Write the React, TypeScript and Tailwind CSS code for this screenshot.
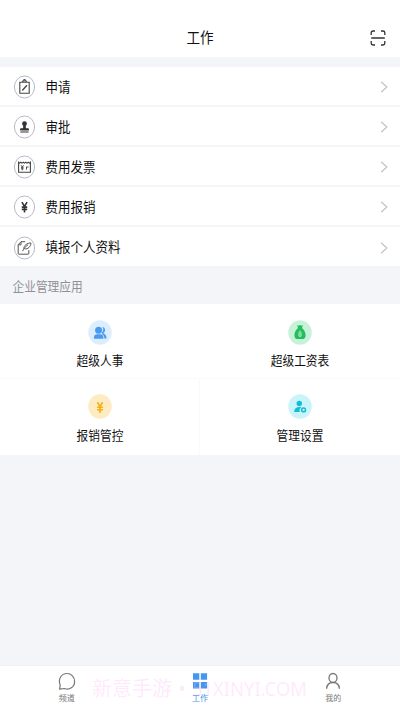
import React from 'react';

const font = "font-['Roboto','Noto_Sans_CJK_SC',sans-serif]";

function Ring({ children }: { children: React.ReactNode }) {
  return (
    <svg className="h-6 w-[23px] shrink-0" viewBox="0 0 23 24" fill="none" stroke="#444" strokeWidth="1.1">
      <ellipse cx="11.5" cy="12" rx="10.1" ry="11" stroke="#a9b2c3" strokeWidth="0.9" />
      {children}
    </svg>
  );
}

const rows = [
  {
    label: '申请',
    icon: (
      <>
        <path d="M6.8 7.2h9.4v11H6.8zM9.3 7.2l.8-1.5h2.8l.8 1.5" />
        <path d="M10.4 5.6a1.1 1.1 0 0 1 2.2 0" />
        <path d="M9.3 15.5l4.6-5.2" strokeWidth="1.3" />
      </>
    ),
  },
  {
    label: '审批',
    icon: (
      <g fill="#333" stroke="none">
        <circle cx="11.5" cy="8.7" r="2.4" />
        <path d="M10.4 10h2.2l.4 3.2h2.2q.7 0 .7.8v1.6H7.1V14q0-.8.7-.8H10zM7.4 16.5h8.2v1H7.4z" />
      </g>
    ),
  },
  {
    label: '费用发票',
    icon: (
      <>
        <path d="M5.6 17.2V7.2l1 .9 1.2-.9 1.2.9 1.3-.9 1.2.9 1.3-.9 1.2.9 1.2-.9 1.2.9 1-.9v10z" />
        <path d="M8 10.2l1.3 1.8 1.3-1.8M9.3 12v3.3M8 12.3h2.6M8 13.8h2.6M13 12h2.6M13.5 12v2.7" strokeWidth="0.9" />
      </>
    ),
  },
  {
    label: '费用报销',
    icon: <path d="M8.9 7.2l2.6 4.3 2.6-4.3M11.5 11.5v6M8.8 12.1h5.4M8.8 14.4h5.4" stroke="#333" strokeWidth="1.6" />,
  },
  {
    label: '填报个人资料',
    icon: (
      <>
        <path d="M12.2 5.7H8L5.2 8.6v9q0 .6.6.6h9.4q.6 0 .6-.6v-3.5M8 5.9v2.9H5.3" stroke="#555" strokeWidth="1" />
        <path d="M9.5 15.2c1.2-2.7 3.3-5 5.5-6.3M11 12.8c-.5-3.3 3-5.8 7-5.8-.3 3.8-3.2 6.5-6.5 5.8" stroke="#555" strokeWidth="1" />
      </>
    ),
  },
];

const apps = [
  {
    label: '超级人事',
    tint: '#dceefe',
    icon: (
      <g fill="#4a9af1">
        <circle cx="10.6" cy="10.2" r="3.5" />
        <path d="M6 18.7v-1.2q0-3.2 3.2-3.2h3q3.2 0 3.2 3.2v1.2zM14.2 7.1c3.5.3 4 4.5 1 6.1 2.3.7 3.4 2.6 3.4 5.2h-2.3c.1-2.1-.8-3.5-2.3-4.5v-1.4c1.6-1.2 1.7-3.8.2-5.4" />
      </g>
    ),
  },
  {
    label: '超级工资表',
    tint: '#c8f2d8',
    icon: (
      <>
        <path d="M9.1 5.1l1.5.6 1.4-.6 1.4.6 1.5-.6-.9 2.9c2.2 1.9 3.6 4.4 3.6 7.2 0 2.6-1.3 3.9-3.5 3.9H9.9c-2.2 0-3.5-1.3-3.5-3.9 0-2.8 1.4-5.3 3.6-7.2z" fill="#23be5d" />
        <path d="M12 10.2l1.5 2.5v3L12 17.2l-1.5-1.5v-3z" fill="#bdf0ce" />
        <path d="M12 11.5v4.5" stroke="#23be5d" strokeWidth="0.8" />
      </>
    ),
  },
  {
    label: '报销管控',
    tint: '#fdebc1',
    icon: <path d="M9.4 8.3l2.6 4.1 2.6-4.1M12 12.4V19M9.1 13.2h5.8M9.1 15.8h5.8" fill="none" stroke="#f5ae13" strokeWidth="1.6" />,
  },
  {
    label: '管理设置',
    tint: '#c9f4f9',
    icon: (
      <>
        <circle cx="11.3" cy="9.5" r="2.7" fill="#14bcd5" />
        <path d="M6.1 18c.1-3.3 2.2-5 5.3-5 .7 0 1.4.1 2 .4-2 1-2.3 3-1.4 4.6z" fill="#14bcd5" />
        <circle cx="15.6" cy="15.9" r="1.9" fill="none" stroke="#14bcd5" strokeWidth="1.5" />
      </>
    ),
  },
];

function Tab({ label, active, children }: { label: string; active?: boolean; children: React.ReactNode }) {
  return (
    <div className={`flex flex-1 flex-col items-center pt-[6px] ${active ? 'text-[#3f95ec]' : 'text-[#777]'}`}>
      {children}
      <span className="mt-[2px] text-[8px] leading-[12px]">{label}</span>
    </div>
  );
}

export default function App() {
  return (
    <div className={`relative flex h-[710px] w-[400px] flex-col overflow-hidden bg-[#f4f5f9] text-[#111] ${font}`}>
      <header className="grid h-[57px] grid-cols-[1fr_auto_1fr] items-center bg-white px-[14px] pt-[18px]">
        <span />
        <h1 className="text-[13.6px] leading-5 scale-y-107">工作</h1>
        <svg className="h-4 w-4 justify-self-end" viewBox="0 0 16 16" fill="none" stroke="#333" strokeWidth="1.3">
          <path d="M1.2 5V2.7Q1.2 1 3 1h2M11 1h2q1.8 0 1.8 1.7V5M1.2 11v2.3Q1.2 15 3 15h2M11 15h2q1.8 0 1.8-1.7V11M1.2 8h13.6" />
        </svg>
      </header>

      <section className="mt-[10px]">
        {rows.map((row) => (
          <div key={row.label} className="flex h-10 items-center border-b-2 border-[#f5f5f7] bg-white pr-[12px] pl-[13px] pt-[2px] last:border-b last:border-[#f4f5f9]">
            <Ring>{row.icon}</Ring>
            <span className="mt-px ml-[9.5px] flex-1 text-[12.5px] leading-5 scale-y-107">{row.label}</span>
            <svg className="h-3 w-2" viewBox="0 0 8 12" fill="none" stroke="#c4c4c8" strokeWidth="1.3">
              <path d="M1.2.8l5.6 5.2-5.6 5.2" />
            </svg>
          </div>
        ))}
      </section>

      <h2 className="flex h-[37px] items-center pl-[12.5px] pt-[4px] text-[11.7px] text-[#909095]">
        <span className="scale-y-107">企业管理应用</span>
      </h2>

      <section className="grid grid-cols-2 bg-white">
        {apps.map((app, i) => (
          <div
            key={app.label}
            className={`flex flex-col items-center border-[#fafafb] ${i < 2 ? 'h-[75px] border-b pt-[16px]' : 'h-[76px] pt-[15px]'} ${i === 2 ? 'shadow-[inset_-1px_0_0_#fafafb]' : ''}`}
          >
            <svg className="h-[25px] w-6" viewBox="0 0 24 25">
              <ellipse cx="12" cy="12.5" rx="11.7" ry="12.2" fill={app.tint} />
              {app.icon}
            </svg>
            <span className={`text-[11.7px] leading-5 scale-y-107 ${i < 2 ? 'mt-[6px]' : 'mt-[7px]'}`}>{app.label}</span>
          </div>
        ))}
      </section>

      <nav className="mt-auto flex h-[45px] border-t border-[#f0f0f1] bg-white">
        <Tab label="频道">
          <svg className="h-[19px] w-[18px]" viewBox="0 0 18 19" fill="none" stroke="#777" strokeWidth="1.2">
            <path d="M1.6 17.2l.6-4.1C-.2 7 3.300 1.500 9 1.500c4.300 0 7.600 3.500 7.600 7.900 0 5.600-5.200 9-10.100 7.100z" strokeLinejoin="round" />
          </svg>
        </Tab>
        <Tab label="工作" active>
          <svg className="h-[19px] w-[18px]" viewBox="0 0 18 19" fill="#4596ed">
            <path d="M2 1.200h6.300v6.600H2zM9.800 1.200h6.300v6.600H9.800zM2 9.900h6.300v6.600H2zM9.800 9.900h6.300v6.600H9.800z" />
          </svg>
        </Tab>
        <Tab label="我的">
          <svg className="h-[19px] w-[18px]" viewBox="0 0 18 19" fill="none" stroke="#777" strokeWidth="1.3">
            <ellipse cx="9" cy="5.900" rx="4" ry="4.400" />
            <path d="M2.600 16.700c.2-3.800 2.700-6.200 6.400-6.200s6.200 2.400 6.400 6.200" />
          </svg>
        </Tab>
      </nav>

      <div className="pointer-events-none absolute top-[675px] left-[92px] flex text-[20px] leading-7 whitespace-pre text-[#ffb4f5]/30 font-['Noto_Sans','Noto_Sans_CJK_SC',sans-serif]">
        <span>新意手游</span>
        <span className="w-5 text-center">•</span>
        <span className="origin-left scale-x-92">51XINYI.COM</span>
      </div>
    </div>
  );
}
